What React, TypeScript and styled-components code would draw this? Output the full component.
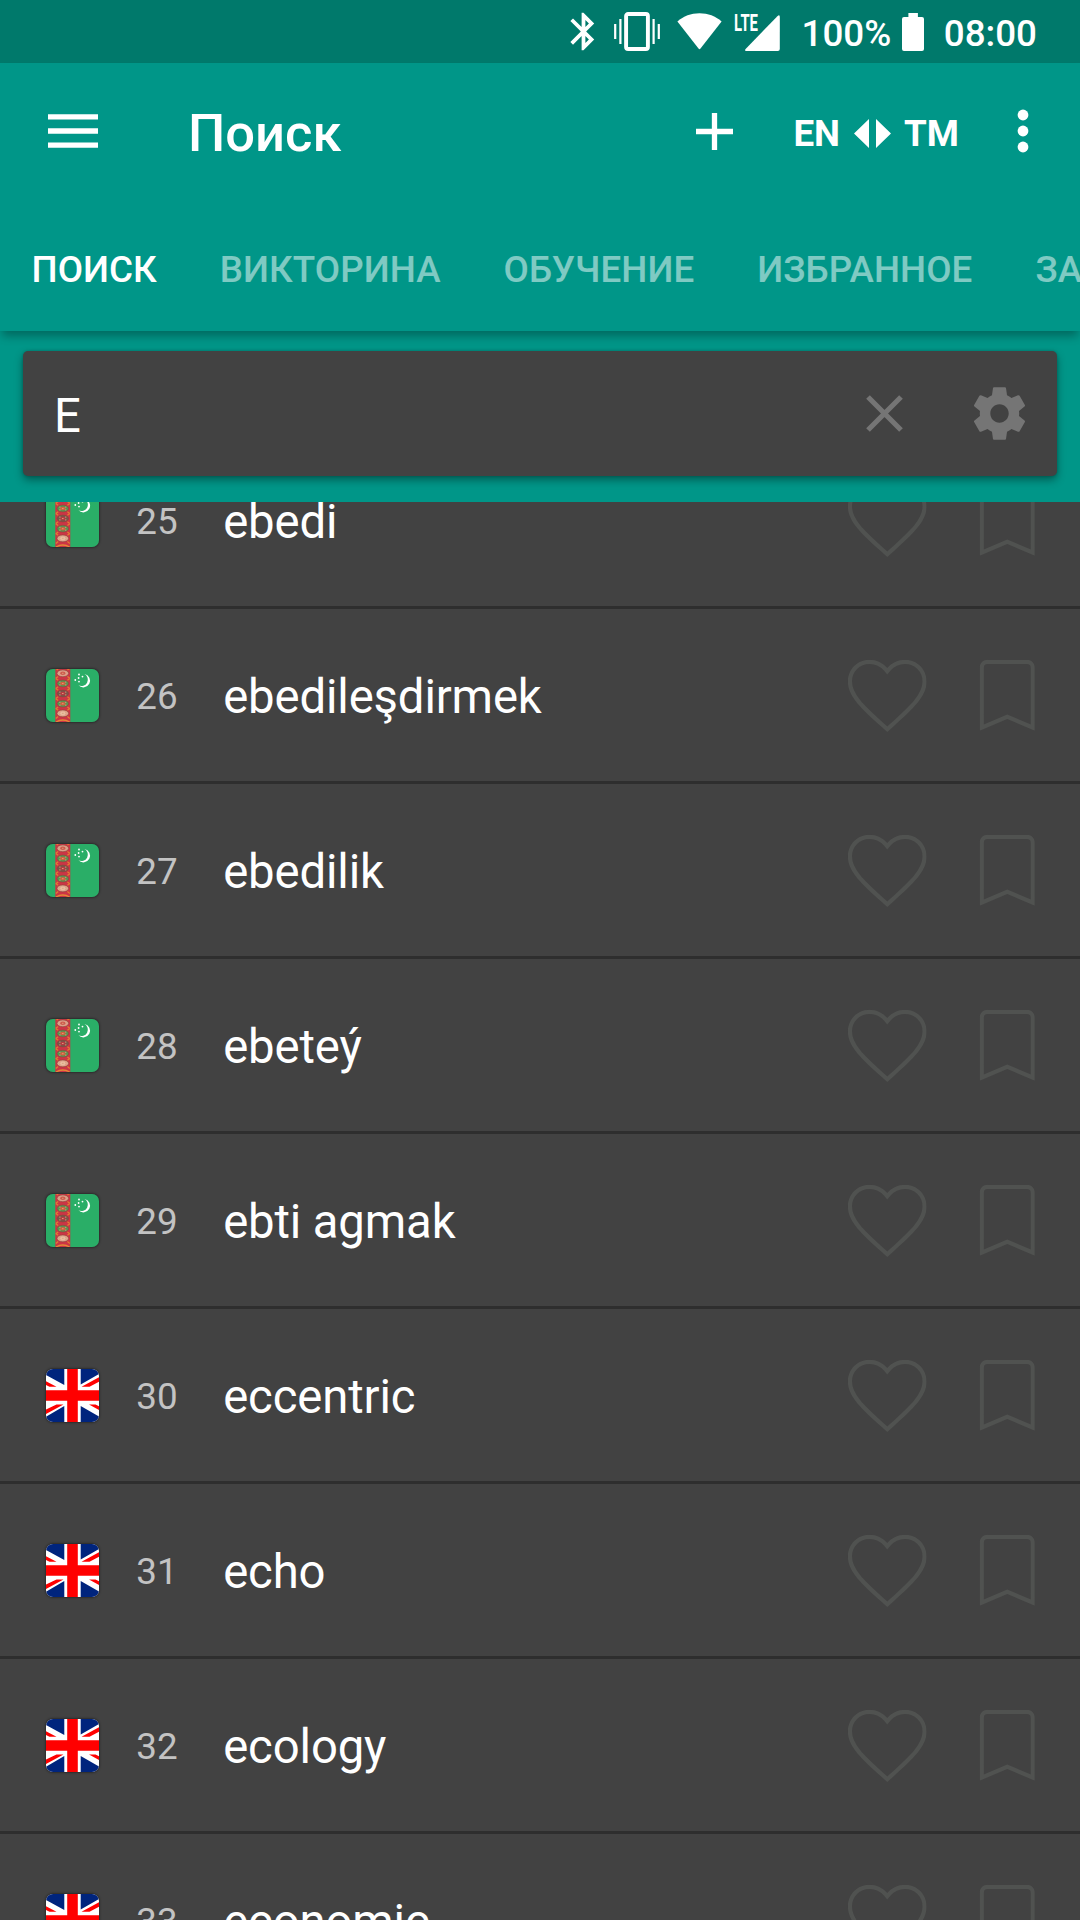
import React from "react";
import styled, { createGlobalStyle } from "styled-components";

const GlobalStyle = createGlobalStyle`
  *, *::before, *::after { box-sizing: border-box; }
  body { margin: 0; background: #424242; font-family: Roboto, "Noto Sans", sans-serif; }
  svg { display: block; flex: none; }
`;

const Screen = styled.main`
  width: 1080px;
  height: 1920px;
  display: flex;
  flex-direction: column;
  overflow: hidden;
  background: #424242;
  color: #fff;
`;

const StatusBar = styled.div`
  height: 63px;
  flex: none;
  display: flex;
  align-items: center;
  justify-content: flex-end;
  padding-right: 43px;
  background: #00796b;
`;

const StatusIcon = styled.svg<{ $gap: number }>`
  margin-right: ${(p) => p.$gap}px;
  overflow: visible;
`;

const StatusText = styled.span<{ $gap?: number }>`
  font-size: 36.75px;
  font-weight: 500;
  line-height: 43px;
  padding-top: 3px;
  margin-right: ${(p) => p.$gap ?? 0}px;
`;

const Header = styled.header`
  flex: none;
  background: #009688;
  z-index: 1;
  box-shadow: 0 7px 9px -2px rgba(0, 0, 0, 0.3);
`;

const Toolbar = styled.div`
  height: 144px;
  display: flex;
  align-items: center;
  padding: 0 51.5px 8px 48px;
`;

const Title = styled.h1`
  flex: 1;
  margin: 0 0 0 90px;
  padding-top: 4px;
  font-size: 52.5px;
  font-weight: 500;
  line-height: 62px;
`;

const Languages = styled.div`
  display: flex;
  align-items: center;
  gap: 13.5px;
  margin: 0 57.5px 0 60px;
  padding-top: 4px;
  font-size: 36.75px;
  font-weight: 700;
  line-height: 43px;
`;

const Tabs = styled.nav`
  height: 124px;
  display: flex;
  align-items: center;
  overflow: hidden;
`;

const Tab = styled.span<{ $active?: boolean }>`
  flex: none;
  padding: 0 31.5px;
  font-size: 36.75px;
  font-weight: 500;
  line-height: 43px;
  letter-spacing: 0.06px;
  white-space: nowrap;
  color: ${(p) => (p.$active ? "#fff" : "rgba(255, 255, 255, 0.5)")};
`;

const SearchArea = styled.section`
  height: 171px;
  flex: none;
  padding: 20px 23px 26px;
  background: #009688;
`;

const SearchCard = styled.div`
  height: 125px;
  display: flex;
  align-items: center;
  gap: 65px;
  padding: 0 26px 0 31px;
  border-radius: 5px;
  background: #424242;
  box-shadow: 0 4px 9px rgba(0, 0, 0, 0.38), 0 0 3px rgba(0, 0, 0, 0.2);
  position: relative;
  z-index: 2;
`;

const Query = styled.span`
  flex: 1;
  padding-top: 5px;
  font-size: 47.25px;
  line-height: 56px;
`;

const List = styled.div`
  flex: 1;
  min-height: 0;
  overflow: hidden;
`;

const Rows = styled.ul`
  list-style: none;
  margin: -68px 0 0;
  padding: 0;
`;

const Row = styled.li`
  height: 175px;
  display: flex;
  align-items: center;
  padding: 0 26px 0 46px;
  border-bottom: 3px solid #2e2e2e;
`;

const FlagFrame = styled.div`
  width: 53px;
  height: 53px;
  border-radius: 7px;
  overflow: hidden;
  box-shadow: 0 0 2px 1px rgba(0, 0, 0, 0.35);
`;

const Index = styled.span`
  width: 44px;
  margin-left: 36px;
  padding-top: 3px;
  text-align: center;
  font-size: 36.75px;
  line-height: 43px;
  color: #c3c3c3;
`;

const Word = styled.span`
  flex: 1;
  margin-left: 44.2px;
  padding-top: 4px;
  font-size: 47.25px;
  line-height: 56px;
  letter-spacing: -0.13px;
  white-space: nowrap;
`;

const Actions = styled.div`
  display: flex;
  gap: 25px;
`;

const HEART =
  "M12 21.35l-1.45-1.32C5.4 15.36 2 12.28 2 8.5 2 5.42 4.42 3 7.5 3c1.74 0 3.41.81 4.5 2.09C13.09 3.81 14.76 3 16.5 3 19.58 3 22 5.42 22 8.5c0 3.78-3.4 6.86-8.55 11.54L12 21.35z";
const BOOKMARK = "M17 3H7c-1.1 0-2 .9-2 2v16l7-3 7 3V5c0-1.1-.9-2-2-2z";

/* The stroke is doubled and clipped to the shape, so only its inner half shows. */
const OutlineIcon = ({ d, id }: { d: string; id: string }) => (
  <svg width="94.5" height="94.5" viewBox="0 0 24 24">
    <clipPath id={id}>
      <path d={d} />
    </clipPath>
    <path d={d} fill="none" stroke="#505250" strokeWidth="2.1" clipPath={`url(#${id})`} />
  </svg>
);

const Gul = ({ y, fill, core }: { y: number; fill: string; core: string }) => (
  <g transform={`translate(16.8 ${y})`}>
    <path d="M-7 -5l2.4 1.8M7 -5l-2.4 1.8M-7 5l2.4-1.8M7 5l-2.4-1.8" stroke="#df7d33" strokeWidth="1.3" />
    <ellipse rx="5.8" ry="3.4" fill={fill} stroke="#8a4638" strokeWidth="0.6" />
    <ellipse rx="2.8" ry="1.8" fill={core} />
    <path d="M-3.6 -1.4h1.4M2.2 -1.4h1.4M-3.6 1.4h1.4M2.2 1.4h1.4M-0.8 0h1.6" stroke="#dba27c" strokeWidth="0.9" />
  </g>
);

const TurkmenFlag = () => (
  <svg width="53" height="53" viewBox="0 0 53 53">
    <rect width="53" height="53" fill="#2aae67" />
    <rect x="9.3" width="15" height="53" fill="#cc3545" />
    <Gul y={4.3} fill="#dca08a" core="#cf5a4c" />
    <Gul y={14.5} fill="#5b9250" core="#d5603e" />
    <Gul y={24.5} fill="#7a5549" core="#b83a41" />
    <Gul y={34.7} fill="#5b9250" core="#d5603e" />
    <Gul y={44.4} fill="#dfa78e" core="#e8bda0" />
    <path d="M10 53q6.8-4 13.6 0" fill="none" stroke="#e58a35" strokeWidth="1.4" />
    <path d="M38.5 5.1A6.7 6.7 0 1 1 32.5 16.3 6.35 6.35 0 1 0 38.5 5.1z" fill="#fff" />
    <g fill="#fff">
      <circle cx="29.3" cy="11" r="0.9" />
      <circle cx="33" cy="5.5" r="0.9" />
      <circle cx="32.6" cy="9" r="0.9" />
      <circle cx="33" cy="12.6" r="0.9" />
      <circle cx="36.5" cy="7.6" r="0.9" />
    </g>
  </svg>
);

const BritishFlag = () => (
  <svg width="53" height="53" viewBox="0 0 53 53">
    <rect width="53" height="53" fill="#fff" />
    <path
      d="M0 0H18.3V16L0 6zM34.7 0H53V5L34.7 15.5zM18.3 53V37L0 47.8V53zM34.7 53V37L53 47.5V53z"
      fill="#00247d"
    />
    <path
      d="M0 12.2L10.5 17.8H3.5L0 16zM53 8.3V12.8L43.5 17.8H35.5zM0 45V40.5L10.5 35.4H17.5zM53 41L43 35.4H49.5L53 37.2z"
      fill="#f00"
    />
    <path d="M26.5 0v53M0 26.5h53" stroke="#f00" strokeWidth="10.6" />
  </svg>
);

type Entry = { index: number; word: string; lang: "tm" | "en" };

const entries: Entry[] = [
  { index: 25, word: "ebedi", lang: "tm" },
  { index: 26, word: "ebedileşdirmek", lang: "tm" },
  { index: 27, word: "ebedilik", lang: "tm" },
  { index: 28, word: "ebeteý", lang: "tm" },
  { index: 29, word: "ebti agmak", lang: "tm" },
  { index: 30, word: "eccentric", lang: "en" },
  { index: 31, word: "echo", lang: "en" },
  { index: 32, word: "ecology", lang: "en" },
  { index: 33, word: "economic", lang: "en" },
];

const tabs = ["ПОИСК", "ВИКТОРИНА", "ОБУЧЕНИЕ", "ИЗБРАННОЕ", "ЗАКЛАДКИ"];

export default function App() {
  return (
    <Screen>
      <GlobalStyle />
      <StatusBar>
        <StatusIcon $gap={8.5} width="45" height="45" viewBox="0 0 24 24" fill="#fff">
          <path d="M17.71 7.71L12 2h-1v7.59L6.41 5 5 6.41 10.59 12 5 17.59 6.41 19 11 14.41V22h1l5.71-5.71-4.3-4.29 4.3-4.29zM13 5.83l1.88 1.88L13 9.59V5.83zm1.88 10.46L13 18.17v-3.76l1.88 1.88z" />
        </StatusIcon>
        <StatusIcon $gap={17} width="46" height="39" viewBox="0 0 46 39">
          <rect x="12.1" y="2" width="21.8" height="35" rx="2" fill="none" stroke="#fff" strokeWidth="3.9" />
          <path d="M1.2 12v15M6.4 7v25M39.6 7v25M44.8 12v15" stroke="#fff" strokeWidth="2.2" />
        </StatusIcon>
        <StatusIcon $gap={11.5} width="45" height="37" viewBox="0 0 45 37" fill="#fff">
          <path d="M0.4 8.4C6.5 3.2 14 0.3 22.5 0.3S38.5 3.2 44.6 8.4L23.5 35.6q-1 1.2-2 0z" />
        </StatusIcon>
        <StatusIcon $gap={22} width="46" height="38" viewBox="0 0 46 38" fill="#fff">
          <text x="0" y="17.5" fontSize="23" fontWeight="700" textLength="24" lengthAdjust="spacingAndGlyphs">
            LTE
          </text>
          <path d="M43.4 3.2q2.4-2 2.4.8V36q0 2-2 2H12.4q-2.4 0-.8-2z" />
        </StatusIcon>
        <StatusText $gap={10.5}>100%</StatusText>
        <StatusIcon $gap={20} width="22" height="38" viewBox="0 0 22 38" fill="#fff">
          <path d="M6.4 0h9.5v4H20q2 0 2 2v30q0 2-2 2H2q-2 0-2-2V6q0-2 2-2h4.4z" />
        </StatusIcon>
        <StatusText>08:00</StatusText>
      </StatusBar>

      <Header>
        <Toolbar>
          <svg width="50" height="34" viewBox="0 0 50 34">
            <path d="M0 2.8h50M0 17h50M0 31.2h50" stroke="#fff" strokeWidth="5.3" />
          </svg>
          <Title>Поиск</Title>
          <svg width="37" height="37" viewBox="0 0 37 37">
            <path d="M18.5 0v37M0 18.5h37" stroke="#fff" strokeWidth="5.3" />
          </svg>
          <Languages>
            <span>EN</span>
            <svg width="37" height="29" viewBox="0 0 37 29" fill="#fff">
              <path d="M15 0v29L0 14.5zM22 0v29l15-14.5z" />
            </svg>
            <span>TM</span>
          </Languages>
          <svg width="12" height="44" viewBox="0 0 12 44" fill="#fff">
            <circle cx="6" cy="6" r="5.4" />
            <circle cx="6" cy="22" r="5.4" />
            <circle cx="6" cy="38" r="5.4" />
          </svg>
        </Toolbar>
        <Tabs>
          {tabs.map((tab, i) => (
            <Tab key={tab} $active={i === 0}>
              {tab}
            </Tab>
          ))}
        </Tabs>
      </Header>

      <SearchArea>
        <SearchCard>
          <Query>E</Query>
          <svg width="37" height="37" viewBox="0 0 37 37">
            <path d="M2 2l33 33M35 2L2 35" stroke="#757575" strokeWidth="5.2" />
          </svg>
          <svg width="63" height="63" viewBox="0 0 24 24" fill="#757575">
            <path d="M19.43 12.98c.04-.32.07-.64.07-.98s-.03-.66-.07-.98l2.11-1.65c.19-.15.24-.42.12-.64l-2-3.46c-.12-.22-.39-.3-.61-.22l-2.49 1c-.52-.4-1.08-.73-1.69-.98l-.38-2.65C14.46 2.18 14.25 2 14 2h-4c-.25 0-.46.18-.49.42l-.38 2.65c-.61.25-1.17.59-1.69.98l-2.49-1c-.23-.09-.49 0-.61.22l-2 3.46c-.13.22-.07.49.12.64l2.11 1.65c-.04.32-.07.65-.07.98s.03.66.07.98l-2.11 1.65c-.19.15-.24.42-.12.64l2 3.46c.12.22.39.3.61.22l2.49-1c.52.4 1.08.73 1.69.98l.38 2.65c.03.24.24.42.49.42h4c.25 0 .46-.18.49-.42l.38-2.65c.61-.25 1.17-.59 1.69-.98l2.49 1c.23.09.49 0 .61-.22l2-3.46c.12-.22.07-.49-.12-.64l-2.11-1.65zM12 15.5c-1.93 0-3.5-1.57-3.5-3.5s1.57-3.5 3.5-3.5 3.5 1.57 3.5 3.5-1.57 3.5-3.5 3.5z" />
          </svg>
        </SearchCard>
      </SearchArea>

      <List>
        <Rows>
          {entries.map(({ index, word, lang }) => (
            <Row key={index}>
              <FlagFrame>{lang === "tm" ? <TurkmenFlag /> : <BritishFlag />}</FlagFrame>
              <Index>{index}</Index>
              <Word>{word}</Word>
              <Actions>
                <OutlineIcon d={HEART} id={`heart-${index}`} />
                <OutlineIcon d={BOOKMARK} id={`bookmark-${index}`} />
              </Actions>
            </Row>
          ))}
        </Rows>
      </List>
    </Screen>
  );
}
